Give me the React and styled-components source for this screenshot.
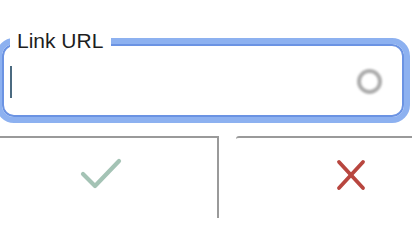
import React from 'react';
import styled, { createGlobalStyle } from 'styled-components';

const GlobalStyle = createGlobalStyle`
  html, body {
    margin: 0;
    padding: 0;
    background: #ffffff;
    overflow: hidden;
  }
  body {
    font-family: "Liberation Sans", Arial, sans-serif;
  }
`;

const Page = styled.div`
  width: 412px;
  height: 232px;
  display: flex;
  flex-direction: column;
  overflow: hidden;
`;

const Field = styled.div`
  position: relative;
  margin: 38px 2px 0 -4px;
  height: 85px;
  box-sizing: border-box;
  border: 6px solid #8db1f0;
  border-radius: 18px;
  box-shadow: inset 0 0 0 2px #6b93e3;
  display: flex;
  align-items: center;
  justify-content: space-between;
  padding: 2px 22px 0 8px;
`;

const Label = styled.span`
  position: absolute;
  top: -14px;
  left: 8px;
  padding: 0 8px 0 7px;
  background: #ffffff;
  font-size: 21px;
  line-height: 22px;
  color: #1e1e1e;
`;

const Caret = styled.span`
  display: block;
  width: 2px;
  height: 32px;
  background: #4b6a80;
`;

const Spinner = styled.span`
  display: block;
  width: 17px;
  height: 17px;
  border: 4px solid #acacac;
  border-radius: 50%;
  filter: blur(0.8px);
`;

const Actions = styled.div`
  display: grid;
  grid-template-columns: 219px 1fr;
  column-gap: 17px;
  margin-top: 13px;
`;

const ActionButton = styled.button`
  height: 82px;
  margin: 0;
  background: #ffffff;
  border: none;
  border-top: 2px solid #9a9a9a;
  border-right: ${(p) => (p.$divider ? '2px solid #9a9a9a' : 'none')};
  border-top-left-radius: ${(p) => (p.$divider ? '0' : '3px')};
  display: flex;
  align-items: center;
  justify-content: center;
  padding: 0 ${(p) => p.$padRight}px 6px ${(p) => p.$padLeft}px;
  cursor: pointer;
`;

const CheckIcon = () => (
  <svg width="44" height="34" viewBox="0 0 44 34">
    <polyline
      points="3,16 15,28 39,3"
      fill="none"
      stroke="#a4c3b5"
      strokeWidth="4.2"
      strokeLinecap="round"
      strokeLinejoin="round"
    />
  </svg>
);

const CrossIcon = () => (
  <svg width="30" height="32" viewBox="0 0 30 32">
    <g stroke="#b8463f" strokeWidth="3.8" strokeLinecap="round">
      <line x1="3" y1="3" x2="27" y2="29" />
      <line x1="27" y1="3" x2="3" y2="29" />
    </g>
  </svg>
);

export default function App() {
  return (
    <Page>
      <GlobalStyle />
      <Field>
        <Label>Link URL</Label>
        <Caret />
        <Spinner />
      </Field>
      <Actions>
        <ActionButton $divider $padLeft={0} $padRight={14} aria-label="Confirm">
          <CheckIcon />
        </ActionButton>
        <ActionButton $padLeft={54} $padRight={0} aria-label="Cancel">
          <CrossIcon />
        </ActionButton>
      </Actions>
    </Page>
  );
}
